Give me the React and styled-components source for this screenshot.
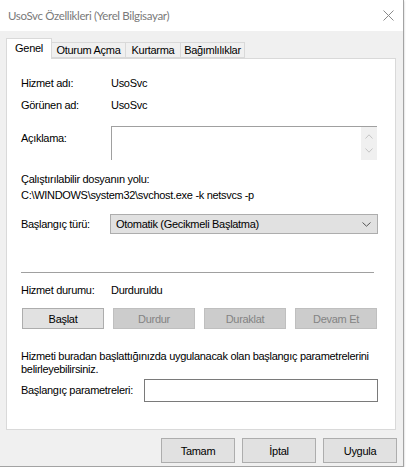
import React from "react";
import styled, { createGlobalStyle } from "styled-components";

const Global = createGlobalStyle`
  html, body { margin: 0; padding: 0; background: #ffffff; overflow: hidden; }
  body { font-family: "Liberation Sans", Arial, sans-serif; font-size: 11px; letter-spacing: -0.3px; color: #000; }
`;

const Window = styled.div`
  width: 404px;
  height: 467px;
  box-sizing: border-box;
  display: flex;
  flex-direction: column;
  background: #f0f0f0;
  border-right: 1px solid #a3a3a3;
  border-bottom: 1px solid #a3a3a3;
  box-shadow: 0 1px 2px rgba(0, 0, 0, 0.25);
`;

const TitleBar = styled.div`
  height: 31px;
  flex: none;
  background: #ffffff;
  display: flex;
  align-items: center;
  justify-content: space-between;
  padding: 0 9px 0 8px;
`;

const Title = styled.span`
  font-family: Lato, "Liberation Sans", sans-serif;
  font-size: 11.5px;
  color: #7a7a7a;
  letter-spacing: -0.35px;
  padding-bottom: 1px;
`;

const Body = styled.div`
  flex: 1;
  display: flex;
  flex-direction: column;
  padding: 7px 7px 0 6px;
`;

const Tabs = styled.div`
  display: flex;
  align-items: flex-end;
  height: 20px;
`;

const Tab = styled.div`
  position: relative;
  z-index: ${(p) => (p.$active ? 2 : 1)};
  box-sizing: border-box;
  width: ${(p) => p.$w}px;
  height: ${(p) => (p.$active ? 21 : 16)}px;
  margin-bottom: ${(p) => (p.$active ? -1 : 0)}px;
  margin-left: ${(p) => (p.$first ? 0 : -1)}px;
  border: 1px solid #d9d9d9;
  border-bottom: ${(p) => (p.$active ? "none" : "1px solid #d9d9d9")};
  background: ${(p) => (p.$active ? "#ffffff" : "#f0f0f0")};
  display: flex;
  align-items: center;
  justify-content: center;
  padding-bottom: ${(p) => (p.$active ? 2 : 0)}px;
  white-space: nowrap;
`;

const Panel = styled.div`
  box-sizing: border-box;
  height: 372px;
  background: #ffffff;
  border: 1px solid #d9d9d9;
  padding: 0 0 0 14px;
  display: flex;
  flex-direction: column;
`;

const Row = styled.div`
  display: flex;
  align-items: ${(p) => (p.$top ? "flex-start" : "center")};
  margin-top: ${(p) => p.$mt}px;
  line-height: 13px;
`;

const Label = styled.span`
  width: ${(p) => p.$w || 90}px;
  flex: none;
  padding-top: ${(p) => p.$pt || 0}px;
  white-space: nowrap;
`;

const Value = styled.span`
  white-space: nowrap;
`;

const Text = styled.div`
  margin-top: ${(p) => p.$mt}px;
  line-height: 13px;
  white-space: nowrap;
`;

const DescBox = styled.div`
  box-sizing: border-box;
  width: 266px;
  height: 34px;
  border-top: 1px solid #a0a0a0;
  border-left: 1px solid #a0a0a0;
  display: flex;
  justify-content: flex-end;
  background: #fff;
`;

const ScrollBar = styled.div`
  width: 16px;
  background: #f0f0f0;
  display: flex;
  flex-direction: column;
  align-items: center;
  justify-content: space-between;
  padding: 7px 0 7px;
  box-sizing: border-box;
`;

const Select = styled.div`
  box-sizing: border-box;
  width: 268px;
  height: 20px;
  background: #e1e1e1;
  border: 1px solid #adadad;
  display: flex;
  align-items: center;
  justify-content: space-between;
  padding: 0 6px 0 5px;
`;

const Separator = styled.div`
  margin-top: ${(p) => p.$mt}px;
  width: 353px;
  height: 1px;
  background: #a0a0a0;
`;

const ButtonRow = styled.div`
  display: flex;
  gap: 9px;
  margin-top: ${(p) => p.$mt}px;
  padding-left: 1px;
`;

const Button = styled.div`
  box-sizing: border-box;
  width: ${(p) => p.$w}px;
  height: ${(p) => p.$h}px;
  border: 1px solid ${(p) => (p.$disabled ? "#bfbfbf" : "#adadad")};
  background: ${(p) => (p.$disabled ? "#cccccc" : "#e1e1e1")};
  color: ${(p) => (p.$disabled ? "#838383" : "#000")};
  display: flex;
  align-items: center;
  justify-content: center;
  white-space: nowrap;
`;

const Input = styled.div`
  box-sizing: border-box;
  width: 234px;
  height: 23px;
  border: 1px solid #7a7a7a;
  background: #fff;
`;

const Footer = styled.div`
  display: flex;
  justify-content: flex-end;
  gap: 7px;
  margin-top: 8px;
  margin-right: -1px;
`;

const Chevron = ({ up, color, w = 9, h = 5 }) => (
  <svg width={w} height={h} viewBox={`0 0 ${w} ${h}`}>
    <path
      d={up ? `M0.5 ${h - 0.5} L${w / 2} 0.8 L${w - 0.5} ${h - 0.5}` : `M0.5 0.5 L${w / 2} ${h - 0.8} L${w - 0.5} 0.5`}
      fill="none"
      stroke={color}
      strokeWidth="1"
    />
  </svg>
);

const CloseIcon = () => (
  <svg width="11" height="11" viewBox="0 0 11 11">
    <path d="M0.5 0.5 L10.5 10.5 M10.5 0.5 L0.5 10.5" stroke="#8a8a8a" strokeWidth="1" fill="none" />
  </svg>
);

export default function App() {
  return (
    <>
      <Global />
      <Window>
        <TitleBar>
          <Title>UsoSvc Özellikleri (Yerel Bilgisayar)</Title>
          <CloseIcon />
        </TitleBar>
        <Body>
          <Tabs>
            <Tab $active $first $w={46}>Genel</Tab>
            <Tab $w={75}>Oturum Açma</Tab>
            <Tab $w={56}>Kurtarma</Tab>
            <Tab $w={65}>Bağımlılıklar</Tab>
          </Tabs>
          <Panel>
            <Row $mt={18}>
              <Label>Hizmet adı:</Label>
              <Value>UsoSvc</Value>
            </Row>
            <Row $mt={9}>
              <Label>Görünen ad:</Label>
              <Value>UsoSvc</Value>
            </Row>
            <Row $mt={14} $top>
              <Label $pt={6}>Açıklama:</Label>
              <DescBox>
                <ScrollBar>
                  <Chevron up color="#c4c4c4" w={8} h={5} />
                  <Chevron color="#c4c4c4" w={8} h={5} />
                </ScrollBar>
              </DescBox>
            </Row>
            <Text $mt={13}>Çalıştırılabilir dosyanın yolu:</Text>
            <Text $mt={3}>C:\WINDOWS\system32\svchost.exe -k netsvcs -p</Text>
            <Row $mt={12}>
              <Label $w={89}>Başlangıç türü:</Label>
              <Select>
                <span>Otomatik (Gecikmeli Başlatma)</span>
                <Chevron color="#555555" w={9} h={5} />
              </Select>
            </Row>
            <Separator $mt={38} />
            <Row $mt={11}>
              <Label>Hizmet durumu:</Label>
              <Value>Durduruldu</Value>
            </Row>
            <ButtonRow $mt={11}>
              <Button $w={82} $h={21}>Başlat</Button>
              <Button $w={82} $h={21} $disabled>Durdur</Button>
              <Button $w={82} $h={21} $disabled>Duraklat</Button>
              <Button $w={82} $h={21} $disabled>Devam Et</Button>
            </ButtonRow>
            <Text $mt={21}>
              Hizmeti buradan başlattığınızda uygulanacak olan başlangıç parametrelerini
              <br />
              belirleyebilirsiniz.
            </Text>
            <Row $mt={3}>
              <Label $w={123}>Başlangıç parametreleri:</Label>
              <Input />
            </Row>
          </Panel>
          <Footer>
            <Button $w={74} $h={25}>Tamam</Button>
            <Button $w={74} $h={25}>İptal</Button>
            <Button $w={74} $h={25}>Uygula</Button>
          </Footer>
        </Body>
      </Window>
    </>
  );
}
